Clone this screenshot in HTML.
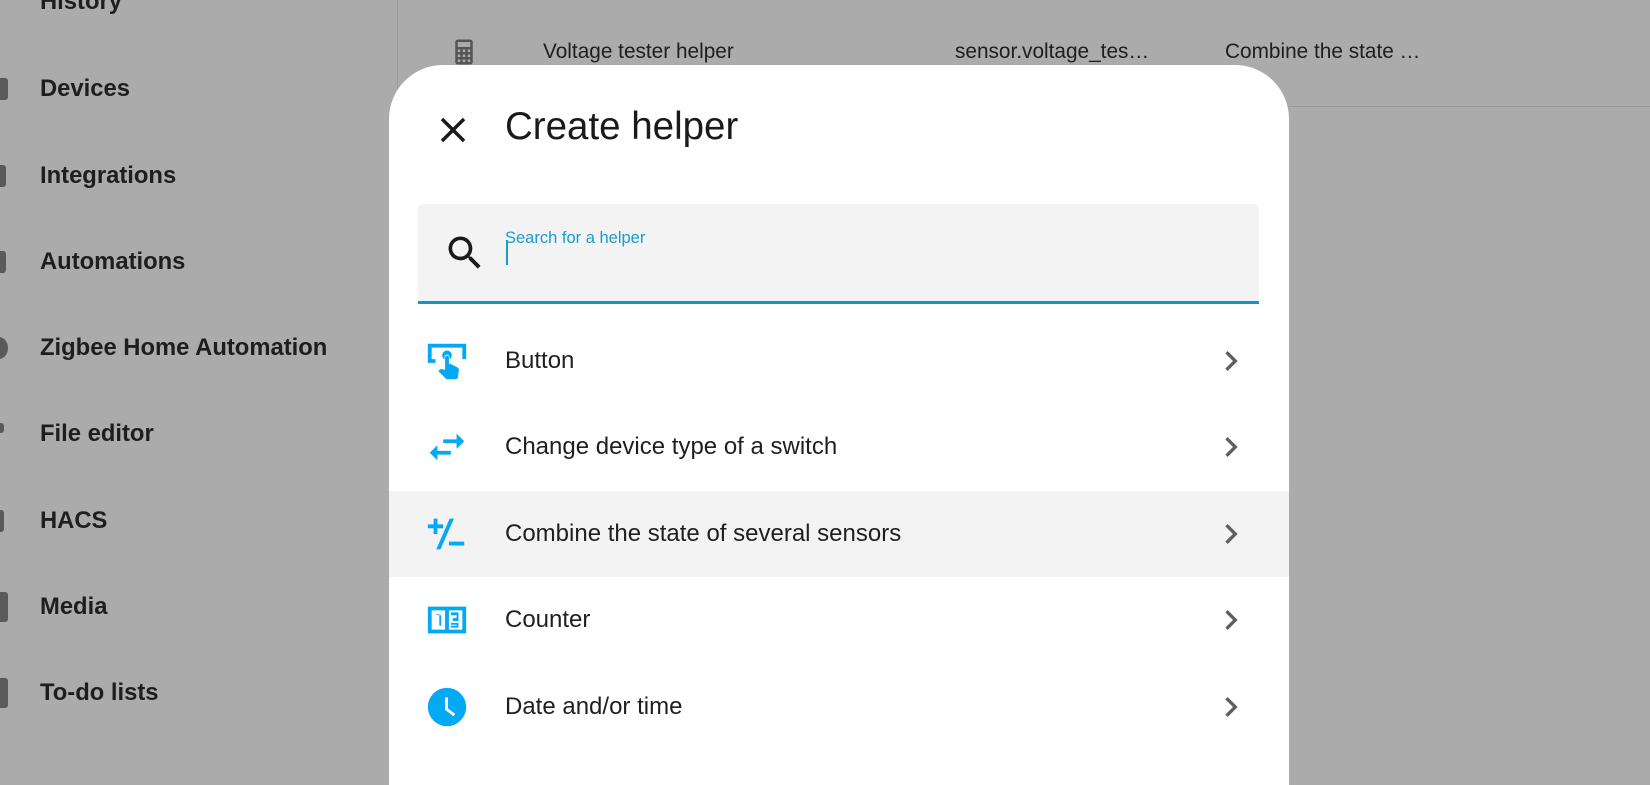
<!DOCTYPE html>
<html><head><meta charset="utf-8"><style>
*{margin:0;padding:0;box-sizing:border-box}
body{width:1650px;height:736px;overflow:hidden;background:#ababab;font-family:"Liberation Sans",Roboto,sans-serif;position:relative;color:#212121}
.side{position:absolute;left:0;top:0;width:398px;height:736px;border-right:1px solid #9c9c9c}
.si{position:absolute;left:40px;font-size:23.8px;font-weight:bold;color:#1e1e1e;transform:translateY(-50%)}
.sic{position:absolute;left:-10px;width:18px;height:22px;background:#5a5a5a;border-radius:3px;transform:translateY(-50%)}
.row{position:absolute;font-size:20.8px;color:#1e1e1e;top:52px;transform:translateY(-50%)}
.dlg{position:absolute;left:389px;top:65px;width:900px;height:720px;background:#fff;border-radius:54px 54px 0 0;overflow:hidden}
.it{position:absolute;left:0;width:900px;height:86px}
.it .ic{position:absolute;left:35px;top:20px;width:46px;height:46px}
.it .t{position:absolute;left:116px;top:50%;transform:translateY(-50%);font-size:24px;color:#1f1f1f}
.it .ch{position:absolute;left:822px;top:23px;width:40px;height:40px}
</style></head><body>
<div class="side">
<div class="si" style="top:2px">History</div>
<div class="si" style="top:89px">Devices</div><div class="sic" style="top:89px"></div>
<div class="si" style="top:176px">Integrations</div><div class="sic" style="top:176px;width:16px"></div>
<div class="si" style="top:262px">Automations</div><div class="sic" style="top:262px;width:16px"></div>
<div class="si" style="top:348px">Zigbee Home Automation</div><div class="sic" style="top:348px;width:18px;border-radius:50%"></div>
<div class="si" style="top:434px">File editor</div><div class="sic" style="top:428px;width:14px;height:10px"></div>
<div class="si" style="top:521px">HACS</div><div class="sic" style="top:521px;width:14px"></div>
<div class="si" style="top:607px">Media</div><div class="sic" style="top:607px;height:30px"></div>
<div class="si" style="top:693px">To-do lists</div><div class="sic" style="top:693px;height:30px"></div>
</div>
<svg style="position:absolute;left:449px;top:36px" width="30" height="32" viewBox="0 0 24 24"><path fill="#555" d="M7,2H17A2,2 0 0,1 19,4V20A2,2 0 0,1 17,22H7A2,2 0 0,1 5,20V4A2,2 0 0,1 7,2M7,4V8H17V4H7M7,10V12H9V10H7M11,10V12H13V10H11M15,10V12H17V10H15M7,14V16H9V14H7M11,14V16H13V14H11M15,14V16H17V14H15M7,18V20H9V18H7M11,18V20H13V18H11M15,18V20H17V18H15Z"/></svg>
<div class="row" style="left:543px">Voltage tester helper</div>
<div class="row" style="left:955px">sensor.voltage_tes…</div>
<div class="row" style="left:1225px">Combine the state …</div>
<div style="position:absolute;left:398px;top:106px;width:1252px;height:1px;background:#989898"></div>

<div class="dlg">
<svg style="position:absolute;left:43px;top:44px" width="42" height="42" viewBox="0 0 24 24"><path fill="#1a1a1a" d="M19,6.41L17.59,5L12,10.59L6.41,5L5,6.41L10.59,12L5,17.59L6.41,19L12,13.41L17.59,19L19,17.59L13.41,12L19,6.41Z"/></svg>
<div style="position:absolute;left:116px;top:40px;font-size:38.5px;color:#1a1a1a">Create helper</div>
<div style="position:absolute;left:29px;top:139px;width:841px;height:100px;background:#f3f3f3;border-radius:5px 5px 0 0;border-bottom:3px solid #0d96c8">
<svg style="position:absolute;left:25px;top:27px" width="44" height="44" viewBox="0 0 24 24"><path fill="#1a1a1a" d="M9.5,3A6.5,6.5 0 0,1 16,9.5C16,11.11 15.41,12.59 14.44,13.73L14.71,14H15.5L20.5,19L19,20.5L14,15.5V14.71L13.730,14.44C12.59,15.41 11.11,16 9.5,16A6.5,6.5 0 0,1 3,9.5A6.5,6.5 0 0,1 9.5,3M9.5,5C7,5 5,7 5,9.5C5,12 7,14 9.5,14C12,14 14,12 14,9.5C14,7 12,5 9.5,5Z"/></svg>
<div style="position:absolute;left:87px;top:25px;font-size:16.5px;color:#1a9bd0">Search for a helper</div>
<div style="position:absolute;left:88px;top:36px;width:2px;height:25px;background:#1a9bd0"></div>
</div>

<div class="it" style="top:253px">
<svg class="ic" viewBox="0 0 24 24"><path fill="#03a9f4" d="M2,3H22V11H20V5H4V11H6V13H2V3M12,6.5A2.5,2.5 0 0,1 14.5,9C14.5,9.9 14,10.7 13.3,11.1V10A1.3,1.3 0 0,0 12,8.7A1.3,1.3 0 0,0 10.7,10V11.1C10,10.7 9.5,9.9 9.5,9A2.5,2.5 0 0,1 12,6.5M11,10.2A1,1 0 0,1 12,9.2A1,1 0 0,1 13,10.2V13.5L14,13.6L17.4,15.3C18,15.6 18.3,16.2 18.2,16.8L17.7,20.4C17.6,21 17.1,21.5 16.4,21.5H12.2C11.8,21.5 11.5,21.3 11.2,21L7.5,17.3L8.2,16.5C8.4,16.3 8.7,16.2 9,16.2L11,16.6V10.2Z"/></svg>
<div class="t">Button</div>
<svg class="ch" viewBox="0 0 24 24"><path fill="#5f5f5f" d="M8.59,16.58L13.17,12L8.59,7.41L10,6L16,12L10,18L8.59,16.58Z"/></svg></div>

<div class="it" style="top:339px">
<svg class="ic" viewBox="0 0 24 24"><path fill="#03a9f4" d="M21,9L17,5V8H10V10H17V13M7,11L3,15L7,19V16H14V14H7V11Z"/></svg>
<div class="t">Change device type of a switch</div>
<svg class="ch" viewBox="0 0 24 24"><path fill="#5f5f5f" d="M8.59,16.58L13.17,12L8.59,7.41L10,6L16,12L10,18L8.59,16.58Z"/></svg></div>

<div class="it" style="top:426px;background:#f3f3f3">
<svg class="ic" viewBox="0 0 24 24"><path fill="#03a9f4" d="M5,4H7V7H10V9H7V12H5V9H2V7H5V4M13,16H21V18H13V16M13.4,4H15.6L8.6,20H6.4L13.4,4Z"/></svg>
<div class="t">Combine the state of several sensors</div>
<svg class="ch" viewBox="0 0 24 24"><path fill="#5f5f5f" d="M8.59,16.58L13.17,12L8.59,7.41L10,6L16,12L10,18L8.59,16.58Z"/></svg></div>

<div class="it" style="top:512px">
<svg class="ic" viewBox="0 0 24 24"><path fill="#03a9f4" d="M2,5H22V19H2V5M4,7V17H11V7H4M13,7V17H20V7H13M6,9H8V15H9V9.5H7L6,9M14,8H18V12.5H15V11H17V9.5H14V8M14,13.5H18V16H14V15H17V14.5H14Z"/></svg>
<div class="t">Counter</div>
<svg class="ch" viewBox="0 0 24 24"><path fill="#5f5f5f" d="M8.59,16.58L13.17,12L8.59,7.41L10,6L16,12L10,18L8.59,16.58Z"/></svg></div>

<div class="it" style="top:599px">
<svg class="ic" viewBox="0 0 24 24"><path fill="#03a9f4" d="M12,2A10,10 0 0,0 2,12A10,10 0 0,0 12,22A10,10 0 0,0 22,12A10,10 0 0,0 12,2M16.3,15.6L15.4,16.8L11,13.5V7H12.5V12.8L16.3,15.6Z"/></svg>
<div class="t">Date and/or time</div>
<svg class="ch" viewBox="0 0 24 24"><path fill="#5f5f5f" d="M8.59,16.58L13.17,12L8.59,7.41L10,6L16,12L10,18L8.59,16.58Z"/></svg></div>
</div>
</body></html>
